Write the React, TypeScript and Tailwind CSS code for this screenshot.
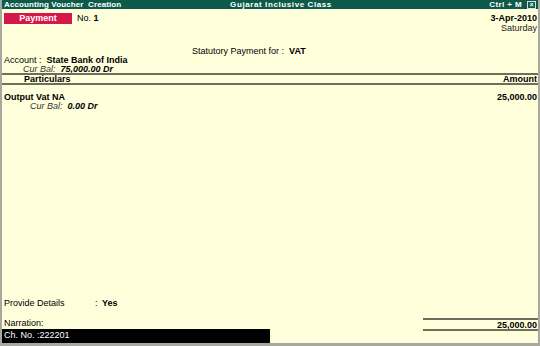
import React from "react";

const font = { fontFamily: "'Liberation Sans', Arial, sans-serif" };

export default function App() {
  return (
    <div
      className="w-[540px] h-[346px] flex flex-col bg-[#ffffdc] border-l-2 border-r-2 border-b-[3px] border-[#a8a8a0] text-[9px] leading-[9px] text-black overflow-hidden"
      style={font}
    >
      {/* TITLE BAR */}
      <div className="h-[9px] bg-[#0e5a4a] flex items-center text-white font-bold text-[8px] leading-[8px] tracking-[0.1px] px-[2px]">
        <div className="flex-1">Accounting Voucher&nbsp; Creation</div>
        <div className="flex-1 text-center pl-[22px] tracking-[0.6px]">Gujarat Inclusive Class</div>
        <div className="flex-1 flex justify-end items-center gap-[5px]">
          <span className="tracking-[0.4px]">Ctrl + M</span>
          <span className="w-[9px] h-[8px] border border-[#dcdcdc] text-[7px] leading-[6px] text-center">×</span>
        </div>
      </div>

      {/* VOUCHER HEADER */}
      <div className="flex justify-between pl-[2px] pr-[1px] mt-[4px]">
        <div className="flex items-center gap-[5px] h-[11px]">
          <div className="w-[68px] h-[11px] bg-[#d6174b] text-white font-bold text-center leading-[11px]">Payment</div>
          <div>
            No. <span className="font-bold">1</span>
          </div>
        </div>
        <div className="text-right">
          <div className="font-bold h-[11px] leading-[11px]">3-Apr-2010</div>
          <div className="text-[#222]">Saturday</div>
        </div>
      </div>

      <div className="mt-[14px] pl-[190px] h-[9px]">
        Statutory Payment for :&nbsp; <span className="font-bold">VAT</span>
      </div>

      <div className="pl-[2px] h-[9px]">
        Account :&nbsp; <span className="font-bold">State Bank of India</span>
      </div>
      <div className="pl-[21px] h-[9px] italic">
        <span className="text-[#333]">Cur Bal:</span>&nbsp; <span className="font-bold">75,000.00 Dr</span>
      </div>

      {/* COLUMN HEADER */}
      <div className="border-t-2 border-[#6e6e5e] border-b-2 flex justify-between font-bold h-[12px] items-center pr-[1px] -mt-[1px]">
        <span className="pl-[22px]">Particulars</span>
        <span>Amount</span>
      </div>

      {/* ENTRY */}
      <div className="mt-[8px] flex justify-between font-bold pl-[2px] pr-[1px] h-[9px]">
        <span>Output Vat NA</span>
        <span>25,000.00</span>
      </div>
      <div className="pl-[28px] italic h-[9px]">
        <span className="text-[#333]">Cur Bal:</span>&nbsp; <span className="font-bold">0.00 Dr</span>
      </div>

      <div className="flex-1" />

      {/* FOOTER */}
      <div className="flex pl-[2px] h-[9px]">
        <span className="w-[91px]">Provide Details</span>
        <span className="w-[7px]">:</span>
        <span className="font-bold">Yes</span>
      </div>
      <div className="h-[10px]" />
      <div className="flex justify-between items-end">
        <span className="pl-[2px] pb-[1px]">Narration:</span>
        <div className="w-[115px] border-t-2 border-[#6e6e5e] text-right font-bold h-[11px] leading-[10px] pr-[1px]">25,000.00</div>
      </div>
      <div className="flex justify-between">
        <div className="w-[268px] h-[14px] bg-black text-white pl-[2px] leading-[12px]">Ch. No. :222201</div>
        <div className="w-[115px] h-[3px] border-t-2 border-[#6e6e5e]" />
      </div>
    </div>
  );
}
